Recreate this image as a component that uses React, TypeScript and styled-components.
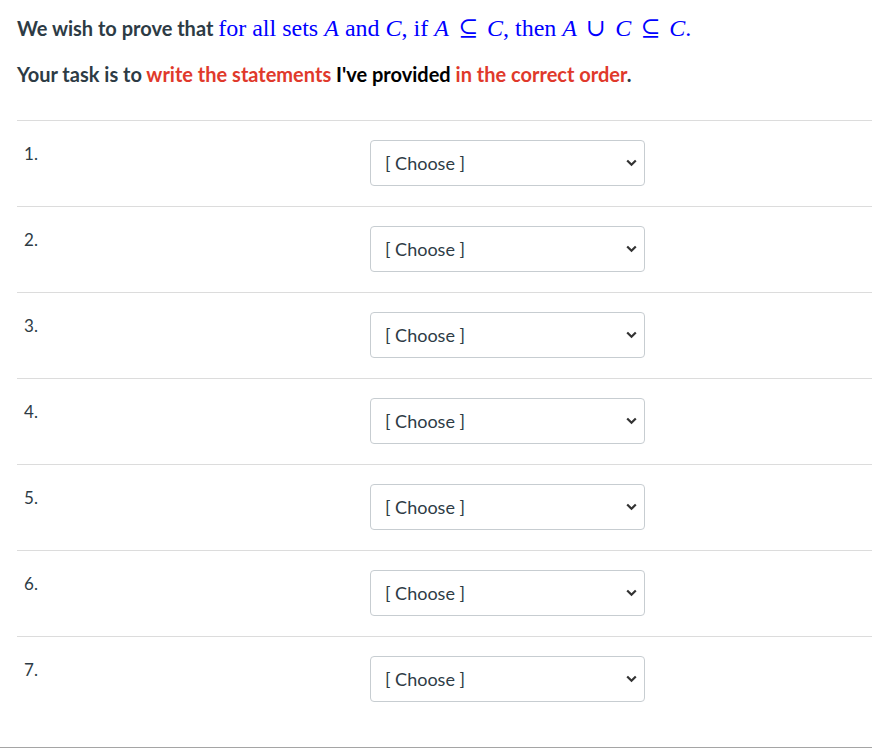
import React from 'react'
import styled, { createGlobalStyle } from 'styled-components'

const GlobalStyle = createGlobalStyle`
  body {
    margin: 0;
    background: #ffffff;
    font-family: Lato, 'Open Sans', sans-serif;
    color: #2d3b45;
  }
`

const Page = styled.div`
  width: 872px;
  height: 756px;
  overflow: hidden;
  display: flex;
  flex-direction: column;
`

const Question = styled.div`
  padding: 12px 0 0 17px;
`

const Line = styled.p<{ gap?: number }>`
  margin: ${props => props.gap || 0}px 0 0;
  font-size: 20px;
  font-weight: 700;
  line-height: 32px;
  white-space: nowrap;
`

const Math = styled.span`
  font-family: 'Liberation Serif', 'DejaVu Serif', serif;
  font-weight: 400;
  font-size: 24px;
  color: #0000ff;
`

const Var = styled.i`
  font-style: italic;
`

const Rel = styled.span`
  padding: 0 3px;
`

const Red = styled.span`
  color: #e0392b;
`

const Dark = styled.span`
  color: #000000;
`

const List = styled.div`
  margin-top: 30px;
`

const Row = styled.div`
  display: grid;
  grid-template-columns: 353px 275px;
  border-top: 1px solid #dcdcdc;
  padding: 19px 0 20px;
`

const Number = styled.div`
  padding: 2px 0 0 7px;
  font-size: 17px;
  line-height: 24px;
  font-weight: 400;
  color: #2d3b45;
`

const SelectBox = styled.div`
  position: relative;
  height: 46px;
  box-sizing: border-box;
  border: 1px solid #c7cdd1;
  border-radius: 4px;
  display: flex;
  align-items: center;
  padding-left: 14px;
  font-size: 18px;
  color: #2d3b45;
`

const Chevron = styled.svg`
  position: absolute;
  right: 7px;
  top: 18px;
`

const Footer = styled.div`
  margin-top: 25px;
  border-top: 1px solid #a5a5a5;
`

const steps = [1, 2, 3, 4, 5, 6, 7]

const App: React.FC = () => {
  return (
    <Page>
      <GlobalStyle />
      <Question>
        <Line>
          We wish to prove that{' '}
          <Math>
            for all sets <Var>A</Var> and <Var>C</Var>, if <Var>A</Var> <Rel>⊆</Rel> <Var>C</Var>, then{' '}
            <Var>A</Var> <Rel>∪</Rel> <Var>C</Var> <Rel>⊆</Rel> <Var>C</Var>.
          </Math>
        </Line>
        <Line gap={14}>
          Your task is to <Red>write the statements</Red> <Dark>I've provided</Dark>{' '}
          <Red>in the correct order</Red>.
        </Line>
        <List>
          {steps.map(step => (
            <Row key={step}>
              <Number>{step}.</Number>
              <SelectBox>
                [ Choose ]
                <Chevron width="11" height="8" viewBox="0 0 11 8">
                  <path d="M1.2 1.5 L5.5 5.8 L9.8 1.5" fill="none" stroke="#333" strokeWidth="2.2" />
                </Chevron>
              </SelectBox>
            </Row>
          ))}
        </List>
      </Question>
      <Footer />
    </Page>
  )
}

export default App
